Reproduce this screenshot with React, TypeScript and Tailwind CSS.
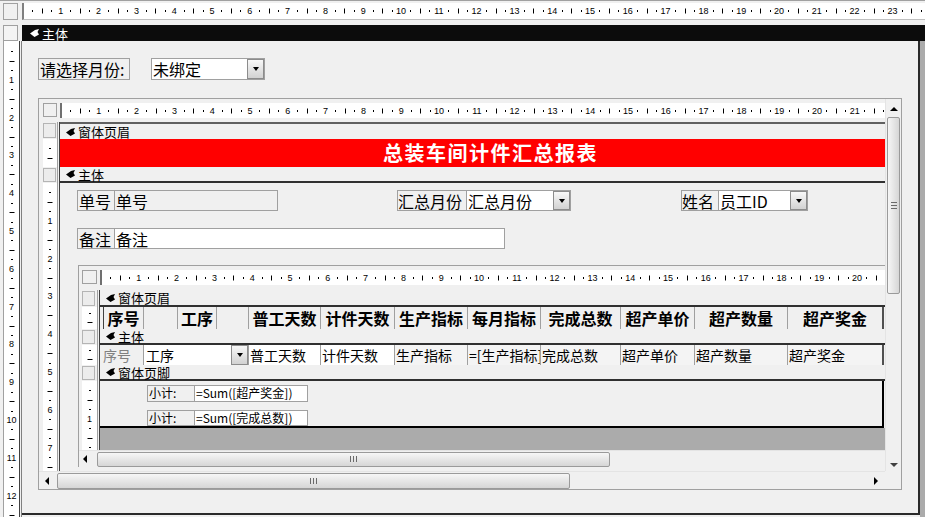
import type { ReactNode } from "react";

const CM = 37.8;

function HRuler({ count, start = 0, tail }: { count: number; start?: number; tail?: boolean }) {
  const items: ReactNode[] = [];
  const n = tail ? count + 1 : count;
  for (let i = 0; i < n; i++) {
    const b = start + i * CM;
    items.push(
      <span key={"a" + i} className="absolute top-1/2 w-px h-[2px] -translate-y-1/2 bg-black" style={{ left: b + CM * 0.25 }} />,
      <span key={"b" + i} className="absolute top-1/2 w-px h-[5px] -translate-y-1/2 bg-black" style={{ left: b + CM * 0.5 }} />,
      <span key={"c" + i} className="absolute top-1/2 w-px h-[2px] -translate-y-1/2 bg-black" style={{ left: b + CM * 0.75 }} />,
    );
    if (i < count) {
      items.push(
        <span key={"n" + i} className="absolute top-1/2 -translate-x-1/2 -translate-y-1/2 text-[9px] leading-none font-['Liberation_Sans',sans-serif]" style={{ left: b + CM }}>
          {i + 1}
        </span>,
      );
    }
  }
  return <div className="relative h-full w-full overflow-hidden">{items}</div>;
}

function VRuler({ count, start = 0, tail }: { count: number; start?: number; tail?: boolean }) {
  const items: ReactNode[] = [];
  const n = tail ? count + 1 : count;
  for (let i = 0; i < n; i++) {
    const b = start + i * CM;
    items.push(
      <span key={"a" + i} className="absolute left-1/2 h-px w-[2px] -translate-x-1/2 bg-black" style={{ top: b + CM * 0.25 }} />,
      <span key={"b" + i} className="absolute left-1/2 h-px w-[5px] -translate-x-1/2 bg-black" style={{ top: b + CM * 0.5 }} />,
      <span key={"c" + i} className="absolute left-1/2 h-px w-[2px] -translate-x-1/2 bg-black" style={{ top: b + CM * 0.75 }} />,
    );
    if (i < count) {
      items.push(
        <span key={"n" + i} className="absolute left-1/2 -translate-x-1/2 -translate-y-1/2 text-[9px] leading-none font-['Liberation_Sans',sans-serif]" style={{ top: b + CM }}>
          {i + 1}
        </span>,
      );
    }
  }
  return <div className="relative h-full w-full overflow-hidden">{items}</div>;
}

function Glyph({ white }: { white?: boolean }) {
  return (
    <svg width="9" height="8" viewBox="0 0 9 8" className="shrink-0">
      <path d="M0 4.5 L5 1 L9 0 L7.5 3 L9 5.5 L4.5 8 Z" fill={white ? "#fff" : "#000"} />
    </svg>
  );
}

function Bar({ label, className = "" }: { label: string; className?: string }) {
  return (
    <div className={`flex-1 min-w-0 flex items-center gap-[3px] pl-[6px] bg-[#f0f0f0] text-[13px] leading-none ${className}`}>
      <Glyph />
      <span>{label}</span>
    </div>
  );
}

function Drop() {
  return (
    <div className="w-[17px] shrink-0 h-full flex items-center justify-center border border-[#8c8c8c] bg-linear-to-b from-[#f8f8f8] to-[#d2d2d2]">
      <span className="w-0 h-0 border-x-[3px] border-x-transparent border-t-[4px] border-t-black" />
    </div>
  );
}

// left ruler cell of a section (ruler column + double line)
function Side({ w = 14, bar, children }: { w?: number; bar?: boolean; children?: ReactNode }) {
  return (
    <div className="shrink-0 flex">
      <div className={bar ? "bg-[#f0f0f0] py-px" : "bg-white"} style={{ width: w }}>
        {bar ? <div className="h-full w-[13px] border border-[#b4b4b4] bg-[#ececec]" /> : children}
      </div>
      <div className="w-px bg-[#a0a0a0]" />
      <div className="w-px bg-[#f0f0f0]" />
      <div className="w-px bg-[#404040]" />
    </div>
  );
}

function Thumb({ w, h }: { w: number; h: number }) {
  return (
    <div className="shrink-0 flex items-center justify-center gap-[2px] rounded-[2px] border border-[#9a9a9a] bg-linear-to-b from-[#f6f6f6] to-[#d6d6d6]" style={{ width: w, height: h }}>
      <span className="w-px h-[6px] bg-[#6a6a6a]" />
      <span className="w-px h-[6px] bg-[#6a6a6a]" />
      <span className="w-px h-[6px] bg-[#6a6a6a]" />
    </div>
  );
}

const LeftArrow = () => <span className="w-0 h-0 border-y-[4px] border-y-transparent border-r-[4px] border-r-black" />;
const RightArrow = () => <span className="w-0 h-0 border-y-[4px] border-y-transparent border-l-[4px] border-l-black" />;

const HEAD = [
  { t: "序号", w: 40 },
  { t: "", w: 34 },
  { t: "工序", w: 39 },
  { t: "", w: 32 },
  { t: "普工天数", w: 72 },
  { t: "计件天数", w: 74 },
  { t: "生产指标", w: 73 },
  { t: "每月指标", w: 73 },
  { t: "完成总数", w: 80 },
  { t: "超产单价", w: 74 },
  { t: "超产数量", w: 93 },
  { t: "超产奖金", w: 95 },
];

const BODY = [
  { t: "普工天数", w: 72, white: true },
  { t: "计件天数", w: 74, white: true },
  { t: "生产指标", w: 73 },
  { t: "=[生产指标]", w: 73 },
  { t: "完成总数", w: 80 },
  { t: "超产单价", w: 74 },
  { t: "超产数量", w: 93 },
  { t: "超产奖金", w: 95 },
];

function NestedForm() {
  return (
    <div className="absolute left-[18px] top-[82px] w-[823px] h-[202px] border-l border-t border-[#a0a0a0] flex flex-col bg-[#f0f0f0]">
      <div className="flex flex-1 min-h-0">
        <div className="flex-1 min-w-0 flex flex-col pt-[4px] pl-[3px]">
          {/* ruler */}
          <div className="flex h-[15px]">
            <div className="w-[18px] shrink-0">
              <div className="w-[15px] h-[14px] border border-[#a0a0a0] bg-[#f0f0f0]" />
            </div>
            <div className="flex-1 bg-white border-l-2 border-[#707070]">
              <HRuler count={20} start={-1} tail />
            </div>
          </div>
          <div className="h-[5px]" />
          {/* 窗体页眉 */}
          <div className="flex h-[17px]">
            <Side w={15} bar />
            <Bar label="窗体页眉" className="border-b-2 border-[#303030]" />
          </div>
          <div className="flex h-[22px]">
            <Side w={15}>
              <VRuler count={0} start={-3.5} tail />
            </Side>
            <div className="flex-1 flex min-w-0">
              <div className="w-[3px] shrink-0" />
              {HEAD.map((c, i) => (
                <div
                  key={i}
                  className={`shrink-0 flex items-center justify-center border-l ${i === 0 ? "border-[#404040]" : "border-[#a0a0a0]"} text-[16px] font-bold leading-[18px] whitespace-nowrap overflow-hidden`}
                  style={{ width: c.w }}
                >
                  {c.t}
                </div>
              ))}
              <div className="w-[2px] shrink-0 bg-[#505050]" />
            </div>
          </div>
          {/* 主体 */}
          <div className="flex h-[16px]">
            <Side w={15} bar />
            <Bar label="主体" className="border-b-2 border-[#303030]" />
          </div>
          <div className="flex h-[20px]">
            <Side w={15}>
              <VRuler count={0} start={-4.5} tail />
            </Side>
            <div className="flex-1 flex min-w-0 text-[14px] leading-none">
              <div className="w-[43px] shrink-0 flex items-center pl-[3px] text-[#808080]">序号</div>
              <div className="w-[105px] shrink-0 flex bg-white border-l border-[#a0a0a0]">
                <span className="flex-1 flex items-center pl-[2px]">工序</span>
                <Drop />
              </div>
              {BODY.map((c, i) => (
                <div
                  key={i}
                  className={`shrink-0 flex items-center pl-px border-l border-[#a0a0a0] whitespace-nowrap overflow-hidden ${c.white ? "bg-white" : "bg-[#f4f4f4]"}`}
                  style={{ width: c.w }}
                >
                  {c.t}
                </div>
              ))}
              <div className="w-[2px] shrink-0 bg-[#505050]" />
            </div>
          </div>
          {/* 窗体页脚 */}
          <div className="flex h-[16px]">
            <Side w={15} bar />
            <Bar label="窗体页脚" className="border-b-2 border-[#303030]" />
          </div>
          <div className="flex h-[69px]">
            <Side w={15}>
              <VRuler count={1} tail />
            </Side>
            <div className="flex-1 min-w-0 flex flex-col">
              <div className="h-[47px] w-[784px] border-r-2 border-b-2 border-black flex flex-col gap-[8px] pt-[4px] pl-[47px] text-[12px] leading-none">
                <div className="flex h-[17px]">
                  <div className="w-[48px] border border-[#a0a0a0] flex items-center pl-px">小计:</div>
                  <div className="w-[114px] -ml-px border border-[#a0a0a0] bg-white flex items-center pl-px">=Sum([超产奖金])</div>
                </div>
                <div className="flex h-[17px]">
                  <div className="w-[48px] border border-[#a0a0a0] flex items-center pl-px">小计:</div>
                  <div className="w-[114px] -ml-px border border-[#a0a0a0] bg-white flex items-center pl-px">=Sum([完成总数])</div>
                </div>
              </div>
              <div className="flex-1 bg-[#ababab]" />
            </div>
          </div>
        </div>
        <div className="w-[16px] shrink-0 bg-[#f0f0f0]" />
      </div>
      {/* horizontal scrollbar */}
      <div className="h-[17px] flex items-center bg-[#f0f0f0] border-t border-[#e4e4e4]">
        <div className="w-[12px] flex justify-center">
          <LeftArrow />
        </div>
        <div className="w-[6px]" />
        <Thumb w={513} h={15} />
        <div className="flex-1" />
        <div className="w-[12px] flex justify-center">
          <RightArrow />
        </div>
      </div>
    </div>
  );
}

function MiddleForm() {
  return (
    <div className="mt-[18px] w-[864px] h-[392px] border border-[#a0a0a0] flex flex-col bg-[#f0f0f0]">
      <div className="flex flex-1 min-h-0">
        <div className="flex-1 min-w-0 flex flex-col pt-[4px] pl-[4px] overflow-hidden">
          <div className="flex h-[15px] shrink-0">
            <div className="w-[17px] shrink-0">
              <div className="w-[14px] h-[14px] border border-[#a0a0a0] bg-[#f0f0f0]" />
            </div>
            <div className="flex-1 bg-white border-l-2 border-[#707070]">
              <HRuler count={21} start={-1} tail />
            </div>
          </div>
          <div className="h-[4px] shrink-0" />
          <div className="flex h-[17px] shrink-0">
            <Side bar />
            <Bar label="窗体页眉" className="border-t-2 border-[#606060]" />
          </div>
          <div className="flex h-[28px] shrink-0">
            <Side>
              <VRuler count={0} tail />
            </Side>
            <div className="flex-1 bg-[#ff0000] flex items-center justify-center pl-[36px] text-white text-[20px] font-bold tracking-[1.5px] leading-none">
              总装车间计件汇总报表
            </div>
          </div>
          <div className="flex h-[16px] shrink-0">
            <Side bar />
            <Bar label="主体" className="border-b-2 border-[#303030]" />
          </div>
          <div className="flex flex-1 min-h-0">
            <Side>
              <VRuler count={7} tail />
            </Side>
            <div className="relative flex-1 min-w-0 overflow-hidden text-[16px] leading-none">
              <div className="absolute left-[17px] top-[7px] w-[38px] h-[21px] border border-[#a0a0a0] flex items-center pl-px">单号</div>
              <div className="absolute left-[54px] top-[7px] w-[164px] h-[21px] border border-[#a0a0a0] flex items-center pl-px">单号</div>

              <div className="absolute left-[337px] top-[7px] w-[70px] h-[21px] border border-[#a0a0a0] flex items-center">汇总月份</div>
              <div className="absolute left-[406px] top-[7px] w-[105px] h-[21px] border border-[#a0a0a0] bg-white flex">
                <span className="flex-1 flex items-center pl-px">汇总月份</span>
                <Drop />
              </div>

              <div className="absolute left-[621px] top-[7px] w-[38px] h-[21px] border border-[#a0a0a0] flex items-center">姓名</div>
              <div className="absolute left-[658px] top-[7px] w-[90px] h-[21px] border border-[#a0a0a0] bg-white flex">
                <span className="flex-1 flex items-center pl-px">员工ID</span>
                <Drop />
              </div>

              <div className="absolute left-[17px] top-[45px] w-[38px] h-[21px] border border-[#a0a0a0] flex items-center pl-px">备注</div>
              <div className="absolute left-[54px] top-[45px] w-[391px] h-[21px] border border-[#a0a0a0] bg-white flex items-center pl-px">备注</div>

              <NestedForm />
            </div>
          </div>
        </div>
        {/* vertical scrollbar */}
        <div className="w-[16px] shrink-0 flex flex-col items-center bg-[#f0f0f0] border-l border-[#e4e4e4]">
          <div className="h-[16px] flex items-center justify-center pt-[4px]">
            <span className="w-0 h-0 border-x-[4px] border-x-transparent border-b-[4px] border-b-black" />
          </div>
          <div className="mt-[2px] w-[13px] h-[177px] rounded-[2px] border border-[#9a9a9a] bg-linear-to-r from-[#f6f6f6] to-[#d6d6d6] flex flex-col items-center justify-center gap-[2px]">
            <span className="h-px w-[6px] bg-[#6a6a6a]" />
            <span className="h-px w-[6px] bg-[#6a6a6a]" />
            <span className="h-px w-[6px] bg-[#6a6a6a]" />
          </div>
          <div className="flex-1" />
          <div className="h-[14px] flex items-center justify-center pt-[2px]">
            <span className="w-0 h-0 border-x-[4px] border-x-transparent border-t-[4px] border-t-[#404040]" />
          </div>
        </div>
      </div>
      {/* horizontal scrollbar */}
      <div className="h-[18px] flex bg-[#f0f0f0]">
        <div className="flex-1 flex items-center border-t border-[#e4e4e4]">
          <div className="w-[16px] flex justify-center">
            <LeftArrow />
          </div>
          <div className="w-[2px]" />
          <Thumb w={513} h={16} />
          <div className="flex-1" />
          <div className="w-[18px] flex justify-center">
            <RightArrow />
          </div>
        </div>
        <div className="w-[16px] bg-[#f0f0f0]" />
      </div>
    </div>
  );
}

export default function App() {
  return (
    <div className="w-[925px] h-[517px] overflow-hidden bg-[#f0f0f0] text-black flex flex-col border-t border-[#a0a0a0] font-['Noto_Sans_CJK_SC','Noto_Sans',sans-serif]">
      {/* top ruler */}
      <div className="flex h-[22px] pt-[2px] pl-[3px] shrink-0">
        <div className="w-[15px] h-[17px] border border-[#a0a0a0] bg-[#f0f0f0]" />
        <div className="ml-[4px] flex-1 h-[17px] bg-white border-l-2 border-[#808080] border-b border-b-[#c0c0c0]">
          <HRuler count={23} start={-1} tail />
        </div>
      </div>
      {/* 主体 section bar */}
      <div className="flex h-[16px] mt-[2px] pl-[3px] shrink-0">
        <div className="w-[15px] h-[16px] border border-[#a0a0a0] bg-[#f4f4f4]" />
        <div className="ml-[4px] flex-1 flex items-center gap-[3px] pl-[8px] bg-[#0c0c0c] text-white text-[13px] leading-none">
          <Glyph white />
          <span>主体</span>
        </div>
      </div>
      <div className="flex flex-1 min-h-0">
        <div className="ml-[3px] w-[16px] shrink-0 bg-white border-l border-[#a0a0a0]">
          <VRuler count={12} start={1} tail />
        </div>
        <div className="w-[3px] shrink-0 border-l border-[#404040] border-r border-r-[#808080]" />
        <div className="w-[898px] h-[474px] shrink-0 border-r-2 border-b-2 border-[#2a2a2a] bg-[#f0f0f0] pl-[16px] pt-[17px]">
          <div className="flex h-[22px] text-[16px] leading-none">
            <div className="w-[92px] border border-[#a0a0a0] flex items-center pl-px">请选择月份:</div>
            <div className="ml-[21px] w-[114px] flex border border-[#a0a0a0] bg-white">
              <span className="flex-1 flex items-center pl-px">未绑定</span>
              <Drop />
            </div>
          </div>
          <MiddleForm />
        </div>
        <div className="flex-1 bg-[#ababab]" />
      </div>
    </div>
  );
}
